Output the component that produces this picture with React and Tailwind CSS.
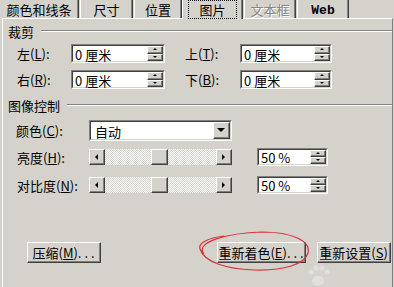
const BG = 'bg-[#d5d2cc]';

function Key({ k }) {
  return (
    <>
      (<span className="underline underline-offset-1">{k}</span>)
    </>
  );
}

function Tab({ children, className = '', selected, disabled }) {
  return (
    <div
      className={`flex items-center justify-center border-l border-white border-r border-r-[#404040] shadow-[inset_-1px_0_#808080] ${BG} ${
        selected ? 'relative z-10 h-[19px] -mb-px' : 'h-[18px]'
      } ${className}`}
    >
      <span
        className={
          disabled
            ? 'text-[#8a8780] [text-shadow:1px_1px_0_#fff]'
            : selected
            ? 'border border-dotted border-black px-[10px] py-[2px]'
            : ''
        }
      >
        {children}
      </span>
    </div>
  );
}

function Raised({ className = '', children }) {
  return (
    <div className={`border border-t-white border-l-white border-r-[#404040] border-b-[#404040] ${className}`}>
      <div className="flex h-full w-full items-center justify-center border-r border-b border-r-[#808080] border-b-[#808080]">
        {children}
      </div>
    </div>
  );
}

function Sunken({ className = '', children }) {
  return (
    <div className={`border border-t-[#808080] border-l-[#808080] border-r-white border-b-white ${className}`}>
      <div className="flex h-full w-full items-center border border-t-[#404040] border-l-[#404040] border-r-[#d5d2cc] border-b-[#d5d2cc] bg-white">
        {children}
      </div>
    </div>
  );
}

function Tri({ dir, size = 4 }) {
  const s = size;
  const pts = {
    up: `0,${s / 2} ${s},${s / 2} ${s / 2},0`,
    down: `0,0 ${s},0 ${s / 2},${s / 2}`,
    left: `${s / 2},0 ${s / 2},${s} 0,${s / 2}`,
    right: `0,0 0,${s} ${s / 2},${s / 2}`,
  }[dir];
  const w = dir === 'up' || dir === 'down' ? s : s / 2;
  const h = dir === 'up' || dir === 'down' ? s / 2 : s;
  return (
    <svg width={w} height={h} viewBox={`0 0 ${w} ${h}`}>
      <polygon points={pts} fill="#000" />
    </svg>
  );
}

function Spin({ value, className = '' }) {
  return (
    <Sunken className={className}>
      <span className="flex-1 pl-[2px] pt-px">{value}</span>
      <div className="flex h-full w-[16px] flex-col">
        <Raised className={`flex-1 ${BG}`}>
          <Tri dir="up" size={4} />
        </Raised>
        <Raised className={`flex-1 ${BG}`}>
          <Tri dir="down" size={4} />
        </Raised>
      </div>
    </Sunken>
  );
}

function Slider() {
  const track =
    'h-full bg-[image:repeating-conic-gradient(#ffffff_0_25%,#d5d2cc_0_50%)] bg-size-[2px_2px] bg-[length:2px_2px]';
  return (
    <div className="flex h-[16px] w-[143px]">
      <Raised className={`w-[16px] ${BG}`}>
        <Tri dir="left" size={6} />
      </Raised>
      <div className={`w-[46px] ${track}`} />
      <Raised className={`w-[17px] ${BG}`} />
      <div className={`w-[48px] ${track}`} />
      <Raised className={`w-[16px] ${BG}`}>
        <Tri dir="right" size={6} />
      </Raised>
    </div>
  );
}

function GroupTitle({ children, className = '' }) {
  return (
    <div className={`flex h-[14px] items-center pl-[5px] ${className}`}>
      <span>{children}</span>
      <div className="ml-[7px] h-0 flex-1 border-t border-b border-t-[#808080] border-b-white" />
    </div>
  );
}

function Button({ children, className = '' }) {
  return (
    <div className={`h-[21px] border border-t-white border-l-white border-r-[#404040] border-b-[#404040] ${BG} ${className}`}>
      <div className="flex h-full items-center justify-center border-r border-b border-r-[#808080] border-b-[#808080] pt-px">
        {children}
      </div>
    </div>
  );
}

export default function App() {
  return (
    <div
      className={`relative h-[287px] w-[394px] overflow-hidden ${BG} font-['Noto_Sans_CJK_SC','DejaVu_Sans',sans-serif] text-[13px] leading-none text-black`}
    >
      <div className="flex h-[18px] items-start">
        <Tab className="w-[79px] border-l-0">颜色和线条</Tab>
        <Tab className="ml-px w-[53px]">尺寸</Tab>
        <Tab className="ml-px w-[48px]">位置</Tab>
        <Tab className="w-[61px]" selected>
          图片
        </Tab>
        <Tab className="ml-[1px] w-[52px]" disabled>
          文本框
        </Tab>
        <Tab className="ml-px w-[52px]">
          <span className="font-['Liberation_Mono',monospace] text-[13px] font-bold">Web</span>
        </Tab>
      </div>

      <div className="ml-[2px] flex h-[269px] w-[391px] flex-col border-t border-l border-r border-t-white border-l-white border-r-[#808080]">
        <GroupTitle className="mt-[5px]">裁剪</GroupTitle>

        <div className="mt-[6px] flex h-[19px] items-center">
          <span className="w-[68px] pl-[14px]">
            左<Key k="L" />:
          </span>
          <Spin value="0 厘米" className="h-[19px] w-[94px]" />
          <span className="ml-[20px] w-[55px]">
            上<Key k="T" />:
          </span>
          <Spin value="0 厘米" className="h-[19px] w-[92px]" />
        </div>

        <div className="mt-[7px] flex h-[19px] items-center">
          <span className="w-[68px] pl-[14px]">
            右<Key k="R" />:
          </span>
          <Spin value="0 厘米" className="h-[19px] w-[94px]" />
          <span className="ml-[20px] w-[55px]">
            下<Key k="B" />:
          </span>
          <Spin value="0 厘米" className="h-[19px] w-[92px]" />
        </div>

        <GroupTitle className="mt-[9px]">图像控制</GroupTitle>

        <div className="mt-[8px] flex h-[21px] items-center">
          <span className="w-[86px] pl-[13px]">
            颜色<Key k="C" />:
          </span>
          <Sunken className="h-[21px] w-[143px]">
            <span className="flex-1 pl-[4px] pt-px">自动</span>
            <Raised className={`h-full w-[17px] ${BG}`}>
              <Tri dir="down" size={8} />
            </Raised>
          </Sunken>
        </div>

        <div className="mt-[7px] flex h-[18px] items-center">
          <span className="w-[86px] pl-[14px]">
            亮度<Key k="H" />:
          </span>
          <Slider />
          <Spin value="50 %" className="ml-[25px] h-[18px] w-[71px]" />
        </div>

        <div className="mt-[10px] flex h-[18px] items-center">
          <span className="w-[86px] pl-[14px]">
            对比度<Key k="N" />:
          </span>
          <Slider />
          <Spin value="50 %" className="ml-[25px] h-[18px] w-[71px]" />
        </div>

        <div className="mt-[48px] flex">
          <Button className="ml-[24px] w-[74px]">
            压缩<Key k="M" />. . .
          </Button>
          <Button className="ml-[116px] w-[89px]">
            重新着色<Key k="E" />. . .
          </Button>
          <Button className="ml-[11px] w-[74px]">
            重新设置<Key k="S" />
          </Button>
        </div>
      </div>

      <svg className="pointer-events-none absolute left-0 top-0" width="394" height="287">
        <path
          d="M 204 254 C 194 242, 228 233, 262 232 C 292 232, 311 241, 308 253 C 305 264, 284 271, 254 270 C 226 269, 204 262, 200 249 C 198 243, 208 238, 224 236"
          fill="none"
          stroke="#d8343a"
          strokeWidth="1.2"
        />
        <g fill="#fff" opacity="0.3">
          <ellipse cx="318" cy="281" rx="6" ry="5" />
          <circle cx="311" cy="272" r="2.5" />
          <circle cx="316" cy="268" r="2.5" />
          <circle cx="322" cy="268" r="2.5" />
          <circle cx="327" cy="272" r="2.5" />
        </g>
      </svg>
    </div>
  );
}
